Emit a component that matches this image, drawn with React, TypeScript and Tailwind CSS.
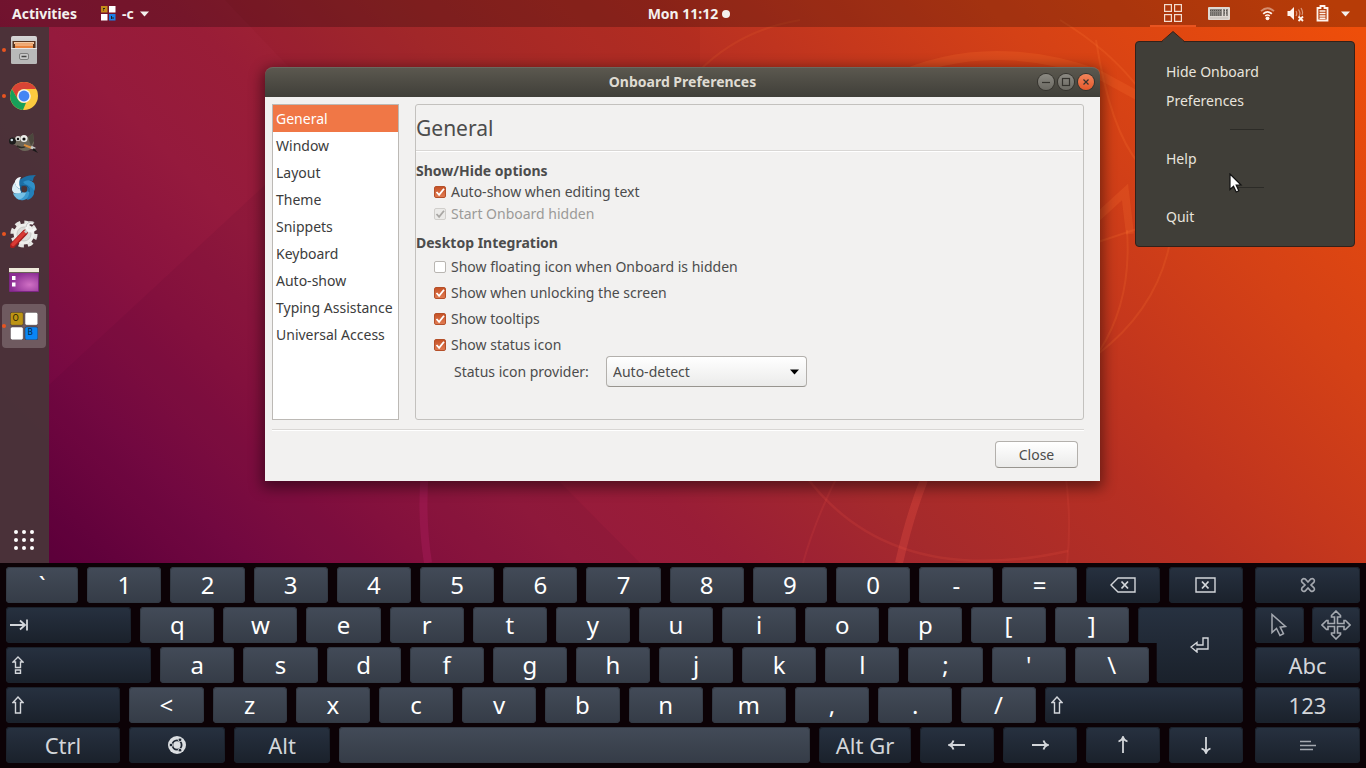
import { useState, type ReactNode } from "react";

/* ---------- Wallpaper ---------- */

function Wallpaper() {
  return (
    <div
      aria-hidden="true"
      className="absolute inset-0 overflow-hidden bg-[linear-gradient(45deg,#5f003c_3%,#770942_13%,#89123f_22%,#951a3d_30%,#991d37_38%,#a52a2c_49%,#b83022_63%,#c6381c_71%,#d44116_80%,#ee4e0a_98%)]"
    >
      <svg className="absolute top-0 right-0" width="1366" height="563" viewBox="0 0 1366 563" fill="none">
        <path d="M49 385 265 185 640 563H49Z" fill="#3a0030" opacity=".07" />
        <path d="M225 0 330 110H700V0Z" fill="#600" opacity=".05" />
        <path d="M430 430Q418 500 428 563" stroke="#a81c5c" strokeWidth="8" opacity=".45" />
        <g stroke="#ff5a4a">
          <path d="M924 480Q910 515 899 563" strokeWidth="8" opacity=".24" />
          <path d="M838 475Q815 520 803 563" strokeWidth="2" opacity=".12" />
          <path d="M805 475Q890 590 1068 551" strokeWidth="2.500" opacity=".14" />
          <path d="M1065 470Q1072 520 1067 563" strokeWidth="2" opacity=".12" />
        </g>
        <g stroke="#ff7a30">
          <path d="M890 80Q985 34 1098 74L1140 97" strokeWidth="9" opacity=".2" />
          <path d="M700 70Q740 30 800 20" strokeWidth="2" opacity=".12" />
          <path d="M1060 20Q1110 50 1140 90" strokeWidth="2" opacity=".2" />
          <path d="M1096 40Q1110 130 1140 165" strokeWidth="2" opacity=".2" />
          <path d="M1090 224 1125 192 1130 234" strokeWidth="8" opacity=".2" />
          <path d="M1098 242 1140 228" strokeWidth="2" opacity=".2" />
          <path d="M1127 230Q1132 300 1100 350" strokeWidth="2" opacity=".18" />
          <path d="M1169 247Q1155 310 1098 354" strokeWidth="2" opacity=".18" />
        </g>
      </svg>
    </div>
  );
}

/* ---------- Top bar ---------- */

function CaretDown({ className }: { className?: string }) {
  return (
    <svg className={className} width="9" height="6" viewBox="0 0 9 6" fill="currentColor" aria-hidden="true">
      <path d="M0 .5h9L4.500 5.500Z" />
    </svg>
  );
}

function TopBar() {
  return (
    <header className="relative z-20 grid h-[27px] grid-cols-[1fr_auto_1fr] items-center bg-black/23 text-sm font-bold text-[#f4f1ee]">
      <div className="flex items-center gap-6 pl-3">
        <button type="button">Activities</button>
        <button type="button" className="flex items-center gap-1.5">
          <svg width="15" height="15" viewBox="0 0 15 15" aria-hidden="true">
            <rect width="6.500" height="6.500" fill="#c58a1a" />
            <rect x="8" width="6.500" height="6.500" fill="#fff" />
            <rect y="8" width="6.500" height="6.500" fill="#fff" />
            <rect x="8" y="8" width="6.500" height="6.500" fill="#1a80ea" />
            <path d="M2 2.500h2M2 4h1M10.500 10v3M12 11v2" stroke="#222" />
          </svg>
          <span>-c</span>
          <CaretDown />
        </button>
      </div>
      <button type="button" className="flex items-center gap-1 pl-3">
        <span>Mon 11:12</span>
        <span className="size-2 rounded-full bg-[#f4f1ee]" />
      </button>
      <div className="flex h-full items-center justify-end pr-4">
        <button
          type="button"
          aria-label="Onboard"
          className="mr-3 flex h-full w-[46px] items-center justify-center border-b-2 border-[#e95420]"
        >
          <svg width="18" height="18" viewBox="0 0 18 18" fill="none" stroke="#f3ddd0" strokeWidth="1.200" aria-hidden="true">
            <rect x=".6" y=".6" width="6.800" height="6.800" />
            <rect x="10.600" y=".6" width="6.800" height="6.800" />
            <rect x=".6" y="10.600" width="6.800" height="6.800" />
            <rect x="10.600" y="10.600" width="6.800" height="6.800" />
          </svg>
        </button>
        <button type="button" aria-label="Keyboard layout" className="mr-[30px]">
          <svg width="22" height="13" viewBox="0 0 22 13" aria-hidden="true">
            <rect width="22" height="13" rx="1" fill="#ded8d2" />
            <rect x="2" y="2" width="18" height="7" fill="#8a8681" />
            <path d="M2 3.500h12M2 6h12M2 8h12M16 3.500h4M16 6h4" stroke="#55524e" strokeDasharray="1 1" />
            <path d="M14.500 2v7M17.500 2v7" stroke="#ded8d2" />
            <path d="M2 11h18" stroke="#c4beb8" />
          </svg>
        </button>
        <button type="button" aria-label="System menu" className="flex items-center">
          <svg className="mr-3" width="15" height="15" viewBox="0 0 15 15" fill="none" stroke="#fff3ec" aria-hidden="true">
            <path d="M1 5.200Q7.500-.8 14 5.200" strokeWidth="1.800" opacity=".45" />
            <path d="M3.200 7.800Q7.500 4 11.800 7.800" strokeWidth="1.800" />
            <path d="M5.200 10Q7.500 8 9.800 10" strokeWidth="1.500" />
            <circle cx="7.500" cy="12.300" r="1.900" fill="#fff3ec" stroke="none" />
          </svg>
          <svg className="mr-3" width="17" height="16" viewBox="0 0 17 16" fill="none" stroke="#fff3ec" aria-hidden="true">
            <path d="M.5 5H3l4-4v13L3 10H.500Z" fill="#fff3ec" stroke="none" />
            <path d="M9 5q1.500 2.500 0 5M11.500 3.500q2.500 4 .5 6.500M14 2q2.500 4 1 7" strokeWidth="1.200" opacity=".5" />
            <path d="m11.500 10.500 4.500 4.500M16 10.500 11.500 15" strokeWidth="1.800" />
          </svg>
          <svg className="mr-3" width="13" height="17" viewBox="0 0 13 17" fill="none" stroke="#fff3ec" aria-hidden="true">
            <path d="M1.500 3h3V1h4v2h3v12.500h-10Z" strokeWidth="1.800" />
            <path d="M3.500 6h6M3.500 8.500h6M3.500 11h6M3.500 13.200h6" strokeWidth="1.400" />
          </svg>
          <CaretDown />
        </button>
      </div>
    </header>
  );
}

/* ---------- Dock ---------- */

const filesIcon = (
  <svg width="28" height="30" viewBox="0 0 28 30">
    <defs>
      <linearGradient id="cab" x1="0" y1="0" x2="0" y2="1">
        <stop offset="0" stopColor="#d6d6d6" />
        <stop offset="1" stopColor="#a3a3a3" />
      </linearGradient>
    </defs>
    <rect x="1" y="1" width="26" height="28" rx="2" fill="url(#cab)" />
    <rect x="2.500" y="6" width="23" height="7" fill="#5a3520" />
    <path d="M4 7h20v2H4z" fill="#f2c9a4" />
    <path d="M5 8.500h18v4.500H5z" fill="#e8823c" />
    <path d="M5 10h18" stroke="#f7d3b0" />
    <path d="M1 13h26v14.500q0 1.500-2 1.500H3q-2 0-2-1.500Z" fill="#b9b9b9" />
    <path d="M1 13.500h26" stroke="#e6e6e6" />
    <rect x="9.500" y="18.500" width="9" height="6" rx="1.500" fill="#c9c9c9" stroke="#7e7e7e" />
    <path d="M11.500 21.500h5" stroke="#444" strokeWidth="1.500" />
  </svg>
);

const chromeIcon = (
  <svg width="28" height="28" viewBox="0 0 28 28">
    <circle cx="14" cy="14" r="14" fill="#fcca3f" />
    <path d="M14 0A14 14 0 0 1 26.120 7H14a7 7 0 0 0-6.060 10.500L1.880 7A14 14 0 0 1 14 0Z" fill="#d94435" />
    <path d="M1.880 7 7.940 17.500A7 7 0 0 0 16 20.700L13 27.960A14 14 0 0 1 1.880 7Z" fill="#17a05a" />
    <circle cx="14" cy="14" r="6.800" fill="#f1f3f4" />
    <circle cx="14" cy="14" r="5.400" fill="#4385f4" />
  </svg>
);

const gimpIcon = (
  <svg width="30" height="24" viewBox="0 0 30 24">
    <path d="M4 9Q9 5 13 6l6 1 5-4 1 10q-2 8-9 8-5 0-8-5l-4-2Z" fill="#6d675a" />
    <path d="m19 7 5-4 1 8-3 5Z" fill="#4b473d" />
    <circle cx="3.500" cy="11" r="3.500" fill="#1b1b1b" />
    <circle cx="2.800" cy="10" r="1.300" fill="#c9d6dc" />
    <circle cx="9" cy="8.500" r="2.600" fill="#d9d9d6" />
    <circle cx="9" cy="9" r="1.200" fill="#111" />
    <circle cx="15" cy="8.500" r="3.500" fill="#ecece9" />
    <circle cx="15" cy="9" r="1.600" fill="#111" />
    <path d="M8 16q5 3 9 0" stroke="#2c2a24" strokeWidth="1.500" fill="none" />
    <path d="m15 15 8 3" stroke="#d98f3c" strokeWidth="2" />
    <path d="m22 17 4 2" stroke="#c9c9c9" strokeWidth="3" />
    <path d="m25 18 4 5-6-3Z" fill="#181818" />
  </svg>
);

const shutterIcon = (
  <svg width="28" height="28" viewBox="0 0 28 28">
    <circle cx="14" cy="15" r="10.500" fill="#2277ad" />
    <path d="M8 10Q11 1 26 1q-3 2-3 6-6-2-11 5Z" fill="#1d6fa5" />
    <path d="M13 8q6-4 11 1 2 4 0 8-3-5-9-7Z" fill="#2f8fc8" />
    <path d="M18 12q7 2 6 8-2 5-7 6 3-6 0-10Z" fill="#2380ba" />
    <path d="M19 17q1 7-5 9-5 1-8-2 6-1 9-6Z" fill="#3b9ad0" />
    <path d="M16 19q-3 7-8 6-4-2-5-6 5 2 9-2Z" fill="#74bfe4" />
    <path d="M12 18q-8 4-10-2 0-5 3-8 0 6 7 8Z" fill="#d9edf6" />
    <path d="M10 15Q4 12 5 7q2-4 6-4-3 5-1 10Z" fill="#eef6fa" />
    <circle cx="14" cy="15" r="3.400" fill="#4a3336" />
    <path d="M10 12q5-1 7 0 3 2 2 6M12 19q-2-3-1-6" stroke="#155a8c" fill="none" />
  </svg>
);

const tweaksIcon = (
  <svg width="28" height="28" viewBox="0 0 28 28">
    <circle cx="14" cy="14" r="11.800" fill="none" stroke="#e4e4e2" strokeWidth="3.500" strokeDasharray="5.300 3.968" />
    <circle cx="14" cy="14" r="10.500" fill="#eeeeec" />
    <circle cx="14" cy="14" r="7" fill="#dcdcda" stroke="#c8c8c6" />
    <path d="M2.500 25.500 15 12.500" stroke="#a41e1e" strokeWidth="5.500" strokeLinecap="round" />
    <path d="M3 24.500 15 12" stroke="#d83a34" strokeWidth="3.500" strokeLinecap="round" />
    <path d="m15 12.500 4-4" stroke="#c9c9c9" strokeWidth="3" />
    <path d="M23.500 3.500A4.200 4.200 0 1 0 25 8" stroke="#f4f4f4" strokeWidth="3" fill="none" />
    <path d="M24 2.500A5.500 5.500 0 0 0 16 7" stroke="#a5a5a5" strokeWidth=".7" fill="none" />
  </svg>
);

const desktopIcon = (
  <svg width="30" height="24" viewBox="0 0 30 24">
    <defs>
      <radialGradient id="scr" cx=".7" cy=".65" r=".7">
        <stop offset="0" stopColor="#d070c4" />
        <stop offset="1" stopColor="#8a2c92" />
      </radialGradient>
    </defs>
    <rect width="30" height="24" rx="1" fill="#7d2684" />
    <rect width="30" height="4" fill="#eee9da" />
    <path d="M0 4.500h30" stroke="#6a6256" />
    <rect x="1" y="5" width="28" height="18" fill="url(#scr)" />
    <rect x="3" y="8" width="3.500" height="4" fill="#fff" />
    <rect x="3" y="14.500" width="3.500" height="4" fill="#fff" />
  </svg>
);

const onboardIcon = (
  <svg width="28" height="28" viewBox="0 0 28 28">
    <g stroke="#3c3438" strokeWidth=".6">
      <rect x=".3" y=".3" width="13" height="13" rx="1.800" fill="#bd9414" />
      <rect x="14.900" y=".3" width="13" height="13" rx="1.800" fill="#fff" />
      <rect x=".3" y="14.900" width="13" height="13" rx="1.800" fill="#fff" />
      <rect x="14.900" y="14.900" width="13" height="13" rx="1.800" fill="#0a86f5" />
    </g>
    <text x="2.500" y="9" fontSize="8" fontFamily="DejaVu Sans, sans-serif" fill="#2a2205">O</text>
    <text x="17.500" y="23" fontSize="8" fontFamily="DejaVu Sans, sans-serif" fill="#03264a">B</text>
  </svg>
);

type DockApp = { name: string; icon: ReactNode; running?: boolean; active?: boolean };

const dockApps: DockApp[] = [
  { name: "Files", icon: filesIcon, running: true },
  { name: "Google Chrome", icon: chromeIcon, running: true },
  { name: "GIMP", icon: gimpIcon },
  { name: "Shutter", icon: shutterIcon },
  { name: "Tweaks", icon: tweaksIcon, running: true },
  { name: "Desktop", icon: desktopIcon },
  { name: "Onboard", icon: onboardIcon, running: true, active: true },
];

function Dock() {
  return (
    <nav aria-label="Dock" className="flex w-[49px] shrink-0 flex-col gap-0.5 bg-[#493439]/95 px-0.5 py-px">
      {dockApps.map((app) => (
        <button
          key={app.name}
          type="button"
          aria-label={app.name}
          className={
            app.active
              ? "relative flex size-11 items-center justify-center rounded bg-white/20"
              : "relative flex size-11 items-center justify-center rounded"
          }
        >
          {app.running && <span className="absolute top-5 left-0 size-1 rounded-full bg-[#e95420]" />}
          {app.icon}
        </button>
      ))}
      <button type="button" aria-label="Show applications" className="mt-auto flex size-11 items-center justify-center">
        <span className="grid grid-cols-3 gap-1">
          {Array.from({ length: 9 }, (_, i) => (
            <span key={i} className="size-1 rounded-full bg-white" />
          ))}
        </span>
      </button>
    </nav>
  );
}

/* ---------- Preferences window ---------- */

const categories = [
  "General",
  "Window",
  "Layout",
  "Theme",
  "Snippets",
  "Keyboard",
  "Auto-show",
  "Typing Assistance",
  "Universal Access",
];

function Check({ label, initial, disabled }: { label: string; initial?: boolean; disabled?: boolean }) {
  return (
    <label className={disabled ? "flex items-center gap-[5px] pl-[18px] text-[#9b9a98]" : "flex items-center gap-[5px] pl-[18px]"}>
      <span className="relative flex size-3">
        <input
          type="checkbox"
          defaultChecked={initial}
          disabled={disabled}
          className="peer size-3 appearance-none rounded-[2px] border border-[#b9b6b2] bg-white checked:border-[#b5502a] checked:bg-linear-to-b checked:from-[#c65225] checked:to-[#e07b52] disabled:border-[#d0cecb] disabled:bg-none disabled:bg-[#ebeae8]"
        />
        <svg
          className="pointer-events-none absolute inset-0 hidden text-white peer-checked:block peer-disabled:text-[#a9a7a4]"
          width="12"
          height="12"
          viewBox="0 0 12 12"
          fill="none"
          stroke="currentColor"
          strokeWidth="1.800"
          aria-hidden="true"
        >
          <path d="m2.500 6 2.600 2.800L10 2.800" />
        </svg>
      </span>
      {label}
    </label>
  );
}

function TitleButton({ label, close, children }: { label: string; close?: boolean; children: ReactNode }) {
  return (
    <button
      type="button"
      aria-label={label}
      className={
        close
          ? "flex size-4 items-center justify-center rounded-full bg-linear-to-b from-[#f4845a] to-[#e4582a] ring-1 ring-[#35332e]"
          : "flex size-4 items-center justify-center rounded-full bg-linear-to-b from-[#8c8a83] to-[#6b6962] ring-1 ring-[#35332e]"
      }
    >
      <svg width="16" height="16" viewBox="0 0 16 16" fill="none" stroke="#35332e" strokeWidth="1.200" aria-hidden="true">
        {children}
      </svg>
    </button>
  );
}

function PreferencesWindow() {
  const [current, setCurrent] = useState("General");
  return (
    <section
      aria-label="Onboard Preferences"
      className="absolute top-10 left-[216px] w-[835px] rounded-t-lg text-sm text-[#4c4c4c] shadow-[0_4px_14px_3px_rgba(0,0,0,0.45)]"
    >
      <header className="flex h-[30px] items-center rounded-t-lg border-t border-[#6b685f] bg-linear-to-b from-[#5b584f] to-[#403f39] px-1.5 pb-0.5">
        <h1 className="flex-1 pl-14 text-center font-bold text-[#dfdbd2]">Onboard Preferences</h1>
        <div className="flex gap-1">
          <TitleButton label="Minimize">
            <path d="M4 8.500h8" />
          </TitleButton>
          <TitleButton label="Maximize">
            <rect x="4.500" y="4.500" width="7" height="7" />
          </TitleButton>
          <TitleButton label="Close window" close>
            <path d="m5.500 5.500 5 5M10.500 5.500l-5 5" />
          </TitleButton>
        </div>
      </header>
      <div className="bg-[#f2f1f0] py-[7px] pr-4 pl-[7px]">
        <div className="flex gap-4">
          <ul className="w-[127px] shrink-0 border border-[#bcb9b5] bg-white">
            {categories.map((name) => (
              <li key={name}>
                <button
                  type="button"
                  onClick={() => setCurrent(name)}
                  className={
                    name === current
                      ? "h-[27px] w-full bg-[#f07746] pl-[3px] text-left whitespace-nowrap text-white"
                      : "h-[27px] w-full pl-[3px] text-left whitespace-nowrap text-[#3c3c3c]"
                  }
                >
                  {name}
                </button>
              </li>
            ))}
          </ul>
          <div className="min-w-0 flex-1 rounded-[3px] border border-[#c3c1be] pb-8">
            <h2 className="flex h-[46px] items-center border-b border-[#d9d7d5] text-[21px] shadow-[0_1px_0_#fff]">{current}</h2>
            <div className="flex flex-col pt-2.5">
              <h3 className="h-5 font-bold">Show/Hide options</h3>
              <div className="grid auto-rows-[22px]">
                <Check label="Auto-show when editing text" initial />
                <Check label="Start Onboard hidden" initial disabled />
              </div>
              <h3 className="mt-2 h-5 font-bold">Desktop Integration</h3>
              <div className="grid auto-rows-[26px] pt-px">
                <Check label="Show floating icon when Onboard is hidden" />
                <Check label="Show when unlocking the screen" initial />
                <Check label="Show tooltips" initial />
                <Check label="Show status icon" initial />
              </div>
              <div className="-mt-0.5 flex items-center pl-[38px]">
                <label htmlFor="provider" className="w-[152px]">
                  Status icon provider:
                </label>
                <div className="relative flex items-center">
                  <select
                    id="provider"
                    className="h-[31px] w-[201px] appearance-none rounded border border-[#b3b0ac] border-b-[#98958f] bg-linear-to-b from-white to-[#ebebea] pl-1.5"
                  >
                    <option>Auto-detect</option>
                    <option>GTK</option>
                    <option>AppIndicator</option>
                  </select>
                  <CaretDown className="pointer-events-none absolute right-2 text-black" />
                </div>
              </div>
            </div>
          </div>
        </div>
        <div className="mt-[9px] flex justify-end border-t border-[#d9d7d5] pt-[11px] pr-1.5 pb-1.5 shadow-[inset_0_1px_0_#fff]">
          <button
            type="button"
            className="h-[27px] w-[83px] rounded border border-[#b3b0ac] border-b-[#98958f] bg-linear-to-b from-white to-[#ebebea]"
          >
            Close
          </button>
        </div>
      </div>
    </section>
  );
}

/* ---------- Indicator menu ---------- */

function IndicatorMenu() {
  return (
    <div className="absolute top-3.5 right-[11px] z-10 w-[220px] rounded border border-[#32211a] bg-[#403e38] py-[15px] text-sm text-[#e8e4dd]">
      <svg className="absolute -top-[11px] left-[25px]" width="24" height="12" viewBox="0 0 24 12" aria-hidden="true">
        <path d="M0 11.500 12 .5l12 11V12H0Z" fill="#403e38" />
        <path d="M0 11 12 .5 24 11" fill="none" stroke="#32211a" />
      </svg>
      <ul className="grid auto-rows-[29px]">
        <li className="flex items-center pl-[30px]">
          <button type="button">Hide Onboard</button>
        </li>
        <li className="flex items-center pl-[30px]">
          <button type="button">Preferences</button>
        </li>
        <li className="flex items-center pl-[94px]">
          <hr className="w-[34px] border-[#2c2b27]" />
        </li>
        <li className="flex items-center pl-[30px]">
          <button type="button">Help</button>
        </li>
        <li className="flex items-center pl-[94px]">
          <hr className="w-[34px] border-[#2c2b27]" />
        </li>
        <li className="flex items-center pl-[30px]">
          <button type="button">Quit</button>
        </li>
      </ul>
      <svg className="absolute top-[131px] left-[93px]" width="14" height="20" viewBox="0 0 14 20" aria-hidden="true">
        <path d="M1 1v15.500l3.500-3.300 2.700 5.800 2.600-1.200L7.200 12H12Z" fill="#fff" stroke="#111" strokeWidth="1.200" />
      </svg>
    </div>
  );
}

/* ---------- On-screen keyboard ---------- */

const lightKey =
  "flex min-w-0 items-center justify-center rounded-[4px] inset-ring inset-ring-[#333a44] bg-linear-to-b from-[#434b58] to-[#353c47] text-2xl leading-none text-white";
const darkKey =
  "flex min-w-0 items-center justify-center rounded-[4px] inset-ring inset-ring-[#1b222c] bg-linear-to-b from-[#273140] to-[#1a212b] text-[22px] leading-none whitespace-nowrap text-[#d3d6da]";

function Letters({ keys }: { keys: string }) {
  return (
    <>
      {keys.split("").map((k) => (
        <button key={k} type="button" className={`${lightKey} flex-[74]`}>
          {k}
        </button>
      ))}
    </>
  );
}

function Glyph({ w, h, children }: { w: number; h: number; children: ReactNode }) {
  return (
    <svg width={w} height={h} viewBox={`0 0 ${w} ${h}`} fill="none" stroke="currentColor" strokeWidth="1.400" aria-hidden="true">
      {children}
    </svg>
  );
}

function ArrowGlyph({ turn }: { turn: string }) {
  return (
    <svg className={turn} width="18" height="18" viewBox="0 0 18 18" fill="none" stroke="currentColor" strokeWidth="1.800" aria-hidden="true">
      <path d="M17 9H1.500M5.500 4.500Q4.500 8 1 9q3.500 1 4.500 4.500" />
    </svg>
  );
}

function ShiftGlyph() {
  return (
    <Glyph w={12} h={18}>
      <path d="M6 1 11 6.500H8.500V17h-5V6.500H1Z" />
    </Glyph>
  );
}

function Keyboard() {
  return (
    <section aria-label="On-screen keyboard" className="relative z-20 flex gap-3 bg-[#0c0206] px-1.5 pt-1 pb-[5px]">
      <div className="grid min-w-0 flex-1 auto-rows-[36px] gap-y-1">
        <div className="flex gap-[9px]">
          <button type="button" className={`${lightKey} flex-[72]`}>
            `
          </button>
          <Letters keys="1234567890-=" />
          <button type="button" aria-label="Backspace" className={`${darkKey} flex-[74]`}>
            <Glyph w={26} h={16}>
              <path d="M8 1h17v14H8L1 8Z" />
              <path d="m11.500 4.500 6.500 7M18 4.500l-6.500 7" strokeWidth="1.800" />
            </Glyph>
          </button>
          <button type="button" aria-label="Delete" className={`${darkKey} flex-[74]`}>
            <Glyph w={21} h={16}>
              <path d="M1 1h19v14H1Z" />
              <path d="m7 4.500 6.500 7M13.500 4.500l-6.500 7" strokeWidth="1.800" />
            </Glyph>
          </button>
        </div>
        <div className="flex gap-[9px]">
          <button type="button" aria-label="Tab" className={`${darkKey} flex-[125]`}>
            <span className="flex-1 pl-1">
              <Glyph w={18} h={12}>
                <path d="M0 6h15M10 1.500 15 6l-5 4.500M17 .5v11" strokeWidth="1.800" />
              </Glyph>
            </span>
          </button>
          <Letters keys="qwertyuiop[]" />
          <div className="relative min-w-0 flex-[105]">
            <button
              type="button"
              aria-label="Enter"
              className={`${darkKey} absolute inset-x-0 top-0 h-[76px] pl-5 [clip-path:polygon(0_2px,2px_0,100%_0,100%_100%,21px_100%,19px_74px,19px_36px,2px_36px,0_34px)]`}
            >
              <Glyph w={20} h={16}>
                <path d="M13 1h5v11H7v3L1 10l6-4.500V8h6Z" />
              </Glyph>
            </button>
          </div>
        </div>
        <div className="flex gap-[9px]">
          <button type="button" aria-label="Caps Lock" className={`${darkKey} flex-[145]`}>
            <span className="flex-1 pl-1.5">
              <Glyph w={12} h={18}>
                <path d="M6 1 11 6H8.500v5.500h-5V6H1Z" />
                <path d="M3.500 14h5v3.300h-5Z" />
              </Glyph>
            </span>
          </button>
          <Letters keys={"asdfghjkl;'\\"} />
          <div className="flex-[85]" />
        </div>
        <div className="flex gap-[9px]">
          <button type="button" aria-label="Left Shift" className={`${darkKey} flex-[114]`}>
            <span className="flex-1 pl-1.5">
              <ShiftGlyph />
            </span>
          </button>
          <Letters keys="<zxcvbnm,./" />
          <button type="button" aria-label="Right Shift" className={`${darkKey} flex-[198]`}>
            <span className="flex-1 pl-1.5">
              <ShiftGlyph />
            </span>
          </button>
        </div>
        <div className="flex gap-[9px]">
          <button type="button" className={`${darkKey} flex-[114]`}>
            Ctrl
          </button>
          <button type="button" aria-label="Super" className={`${darkKey} flex-[96]`}>
            <svg width="18" height="18" viewBox="0 0 18 18" aria-hidden="true">
              <circle cx="9" cy="9" r="9" fill="#dcdfe2" />
              <circle cx="9" cy="9" r="4.600" fill="none" stroke="#1f2733" strokeWidth="1.800" />
              <g fill="#1f2733" stroke="#dcdfe2" strokeWidth=".8">
                <circle cx="3" cy="9" r="1.800" />
                <circle cx="12" cy="3.800" r="1.800" />
                <circle cx="12" cy="14.200" r="1.800" />
              </g>
            </svg>
          </button>
          <button type="button" className={`${darkKey} flex-[96]`}>
            Alt
          </button>
          <button type="button" aria-label="Space" className={`${lightKey} flex-[471]`} />
          <button type="button" className={`${darkKey} flex-[92]`}>
            Alt Gr
          </button>
          <button type="button" aria-label="Left" className={`${darkKey} flex-[74]`}>
            <ArrowGlyph turn="" />
          </button>
          <button type="button" aria-label="Right" className={`${darkKey} flex-[74]`}>
            <ArrowGlyph turn="rotate-180" />
          </button>
          <button type="button" aria-label="Up" className={`${darkKey} flex-[74]`}>
            <ArrowGlyph turn="rotate-90" />
          </button>
          <button type="button" aria-label="Down" className={`${darkKey} flex-[74]`}>
            <ArrowGlyph turn="-rotate-90" />
          </button>
        </div>
      </div>
      <div className="grid w-[105px] auto-rows-[36px] gap-y-1">
        <button type="button" aria-label="Hide keyboard" className={darkKey}>
          <svg width="16" height="16" viewBox="0 0 16 16" fill="none" stroke="#a5a9b0" strokeWidth="1.600" aria-hidden="true">
            <path d="M8 5 10.800 2q1.700-1 2.900.3t.3 2.900L11 8l3 2.800q1 1.700-.3 2.900t-2.900.3L8 11l-2.800 3q-1.700 1-2.900-.3T2 10.800L5 8 2 5.200Q1 3.500 2.300 2.300T5.200 2Z" />
          </svg>
        </button>
        <div className="grid grid-cols-2 gap-2">
          <button type="button" aria-label="Click mode" className={darkKey}>
            <svg width="18" height="24" viewBox="0 0 18 24" fill="none" stroke="#a5a9b0" strokeWidth="1.500" aria-hidden="true">
              <path d="M2 1.500v18l4.500-4 3.500 7 3.500-1.800-3.300-6.500 5.300-.7Z" />
            </svg>
          </button>
          <button type="button" aria-label="Move keyboard" className={darkKey}>
            <svg width="30" height="30" viewBox="0 0 30 30" fill="none" stroke="#a5a9b0" strokeWidth="1.600" className="shrink-0" aria-hidden="true">
              <path d="M15 1l4.500 4.500V7h-3v6.500H23v-3h1.500L29 15l-4.500 4.500H23v-3h-6.500V23h3v1.500L15 29l-4.500-4.500V23h3v-6.500H7v3H5.500L1 15l4.500-4.500H7v3h6.500V7h-3V5.500Z" />
            </svg>
          </button>
        </div>
        <button type="button" className={darkKey}>
          Abc
        </button>
        <button type="button" className={darkKey}>
          123
        </button>
        <button type="button" aria-label="Menu" className={darkKey}>
          <svg width="16" height="11" viewBox="0 0 16 11" fill="none" stroke="#a5a9b0" strokeWidth="1.500" aria-hidden="true">
            <path d="M0 1.500h11M0 5.500h16M0 9.500h13" />
          </svg>
        </button>
      </div>
    </section>
  );
}

export default function App() {
  return (
    <main className="flex min-h-screen flex-col overflow-hidden bg-[#0c0206] font-['Noto_Sans',sans-serif]">
      <div className="relative flex flex-1 flex-col">
        <Wallpaper />
        <TopBar />
        <div className="relative flex flex-1">
          <Dock />
          <div className="relative min-w-0 flex-1">
            <PreferencesWindow />
            <IndicatorMenu />
          </div>
        </div>
      </div>
      <Keyboard />
    </main>
  );
}
